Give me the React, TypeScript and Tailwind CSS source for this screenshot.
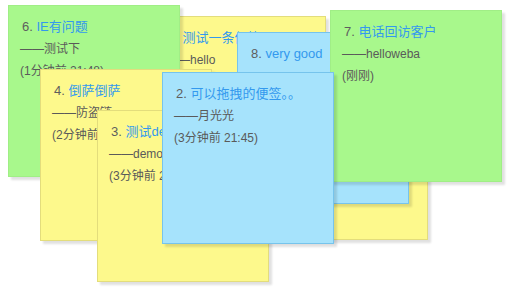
import React from 'react';

type Color = 'green' | 'yellow' | 'blue';

interface Note {
  id: number;
  title: string;
  author: string;
  time: string;
  color: Color;
  x: number;
  y: number;
}

// stacking order = array order (last one on top)
const notes: Note[] = [
  { id: 5, title: '周末聚餐', author: 'admin', time: '(5分钟前 21:43)', color: 'yellow', x: 256, y: 68 },
  { id: 1, title: '测试一条便签', author: 'hello', time: '(6分钟前 21:42)', color: 'yellow', x: 154, y: 16 },
  { id: 6, title: 'IE有问题', author: '测试下', time: '(1分钟前 21:48)', color: 'green', x: 8, y: 5 },
  { id: 4, title: '倒萨倒萨', author: '防盗链', time: '(2分钟前 21:46)', color: 'yellow', x: 40, y: 69 },
  { id: 3, title: '测试demo', author: 'demo', time: '(3分钟前 21:45)', color: 'yellow', x: 97, y: 110 },
  { id: 8, title: 'very good', author: 'anna', time: '(刚刚)', color: 'blue', x: 237, y: 32 },
  { id: 7, title: '电话回访客户', author: 'helloweba', time: '(刚刚)', color: 'green', x: 330, y: 10 },
  { id: 2, title: '可以拖拽的便签。。', author: '月光光', time: '(3分钟前 21:45)', color: 'blue', x: 162, y: 72 },
];

const colorClass: Record<Color, string> = {
  green: 'bg-[#a8f88c] border-[#a0ee86]',
  yellow: 'bg-[#fdf98c] border-[#e3dd7c]',
  blue: 'bg-[#a6e3fc] border-[#76c4ec]',
};

function StickyNote({ note }: { note: Note }) {
  return (
    <div
      className={`absolute w-[172px] h-[172px] border px-[11px] pt-[11px] shadow-[3px_3px_2px_rgba(0,0,0,0.12)] cursor-move ${colorClass[note.color]}`}
      style={{ left: note.x, top: note.y }}
    >
      <div className="ml-[2px] h-5 leading-5 text-[13px] whitespace-nowrap">
        <span className="text-[#5e5e5e]">{note.id}. </span>
        <span className="text-[#3399ee]">{note.title}</span>
      </div>
      <div className="mt-px text-[12px] leading-[22px] text-[#5a5a5a] whitespace-nowrap">
        <p>——{note.author}</p>
        <p>{note.time}</p>
      </div>
    </div>
  );
}

export default function App() {
  return (
    <div
      className="relative w-[508px] h-[289px] bg-white overflow-hidden"
      style={{ fontFamily: '"Liberation Sans", "Noto Sans CJK SC", sans-serif' }}
    >
      {notes.map((n) => (
        <StickyNote key={n.id} note={n} />
      ))}
    </div>
  );
}
